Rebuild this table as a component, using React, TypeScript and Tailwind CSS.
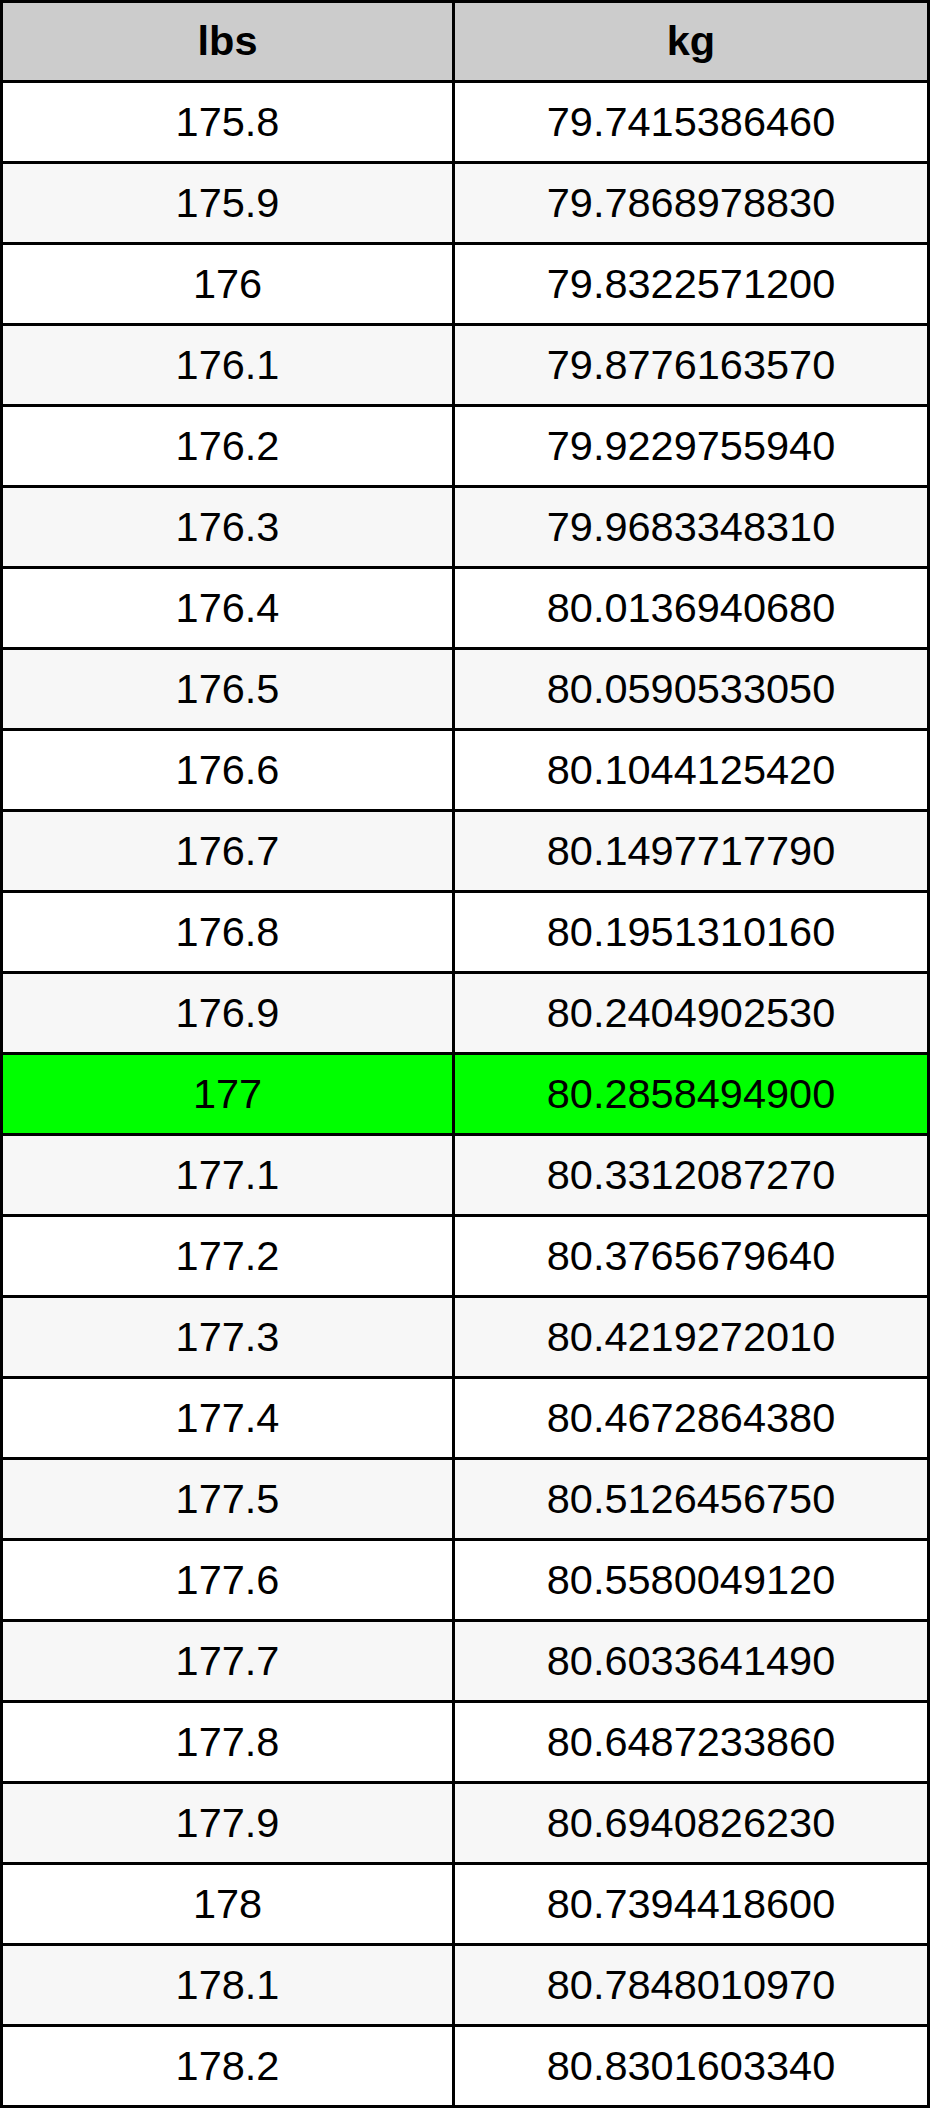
import React from "react";

const rows: [string, string][] = [
  ["175.8", "79.7415386460"],
  ["175.9", "79.7868978830"],
  ["176", "79.8322571200"],
  ["176.1", "79.8776163570"],
  ["176.2", "79.9229755940"],
  ["176.3", "79.9683348310"],
  ["176.4", "80.0136940680"],
  ["176.5", "80.0590533050"],
  ["176.6", "80.1044125420"],
  ["176.7", "80.1497717790"],
  ["176.8", "80.1951310160"],
  ["176.9", "80.2404902530"],
  ["177", "80.2858494900"],
  ["177.1", "80.3312087270"],
  ["177.2", "80.3765679640"],
  ["177.3", "80.4219272010"],
  ["177.4", "80.4672864380"],
  ["177.5", "80.5126456750"],
  ["177.6", "80.5580049120"],
  ["177.7", "80.6033641490"],
  ["177.8", "80.6487233860"],
  ["177.9", "80.6940826230"],
  ["178", "80.7394418600"],
  ["178.1", "80.7848010970"],
  ["178.2", "80.8301603340"],
];

export default function App() {
  return (
    <div className="w-[930px] bg-white font-['Liberation_Sans',Arial,sans-serif] text-black">
      <div className="grid grid-cols-[449px_472px] gap-[3px] bg-black p-[3px]">
        <div className="flex h-[77px] items-center justify-center bg-[#cccccc] text-[41.5px] font-bold">
          lbs
        </div>
        <div className="flex h-[77px] items-center justify-center bg-[#cccccc] text-[41.5px] font-bold">
          kg
        </div>
        {rows.map(([a, b], i) => {
          const bg =
            a === "177"
              ? "bg-[#00ff00]"
              : i % 2 === 0
              ? "bg-white"
              : "bg-[#f7f7f7]";
          return (
            <React.Fragment key={a}>
              <div className={`flex h-[78px] items-center justify-center text-[41.5px] ${bg}`}>
                {a}
              </div>
              <div className={`flex h-[78px] items-center justify-center text-[41.5px] ${bg}`}>
                {b}
              </div>
            </React.Fragment>
          );
        })}
      </div>
    </div>
  );
}
